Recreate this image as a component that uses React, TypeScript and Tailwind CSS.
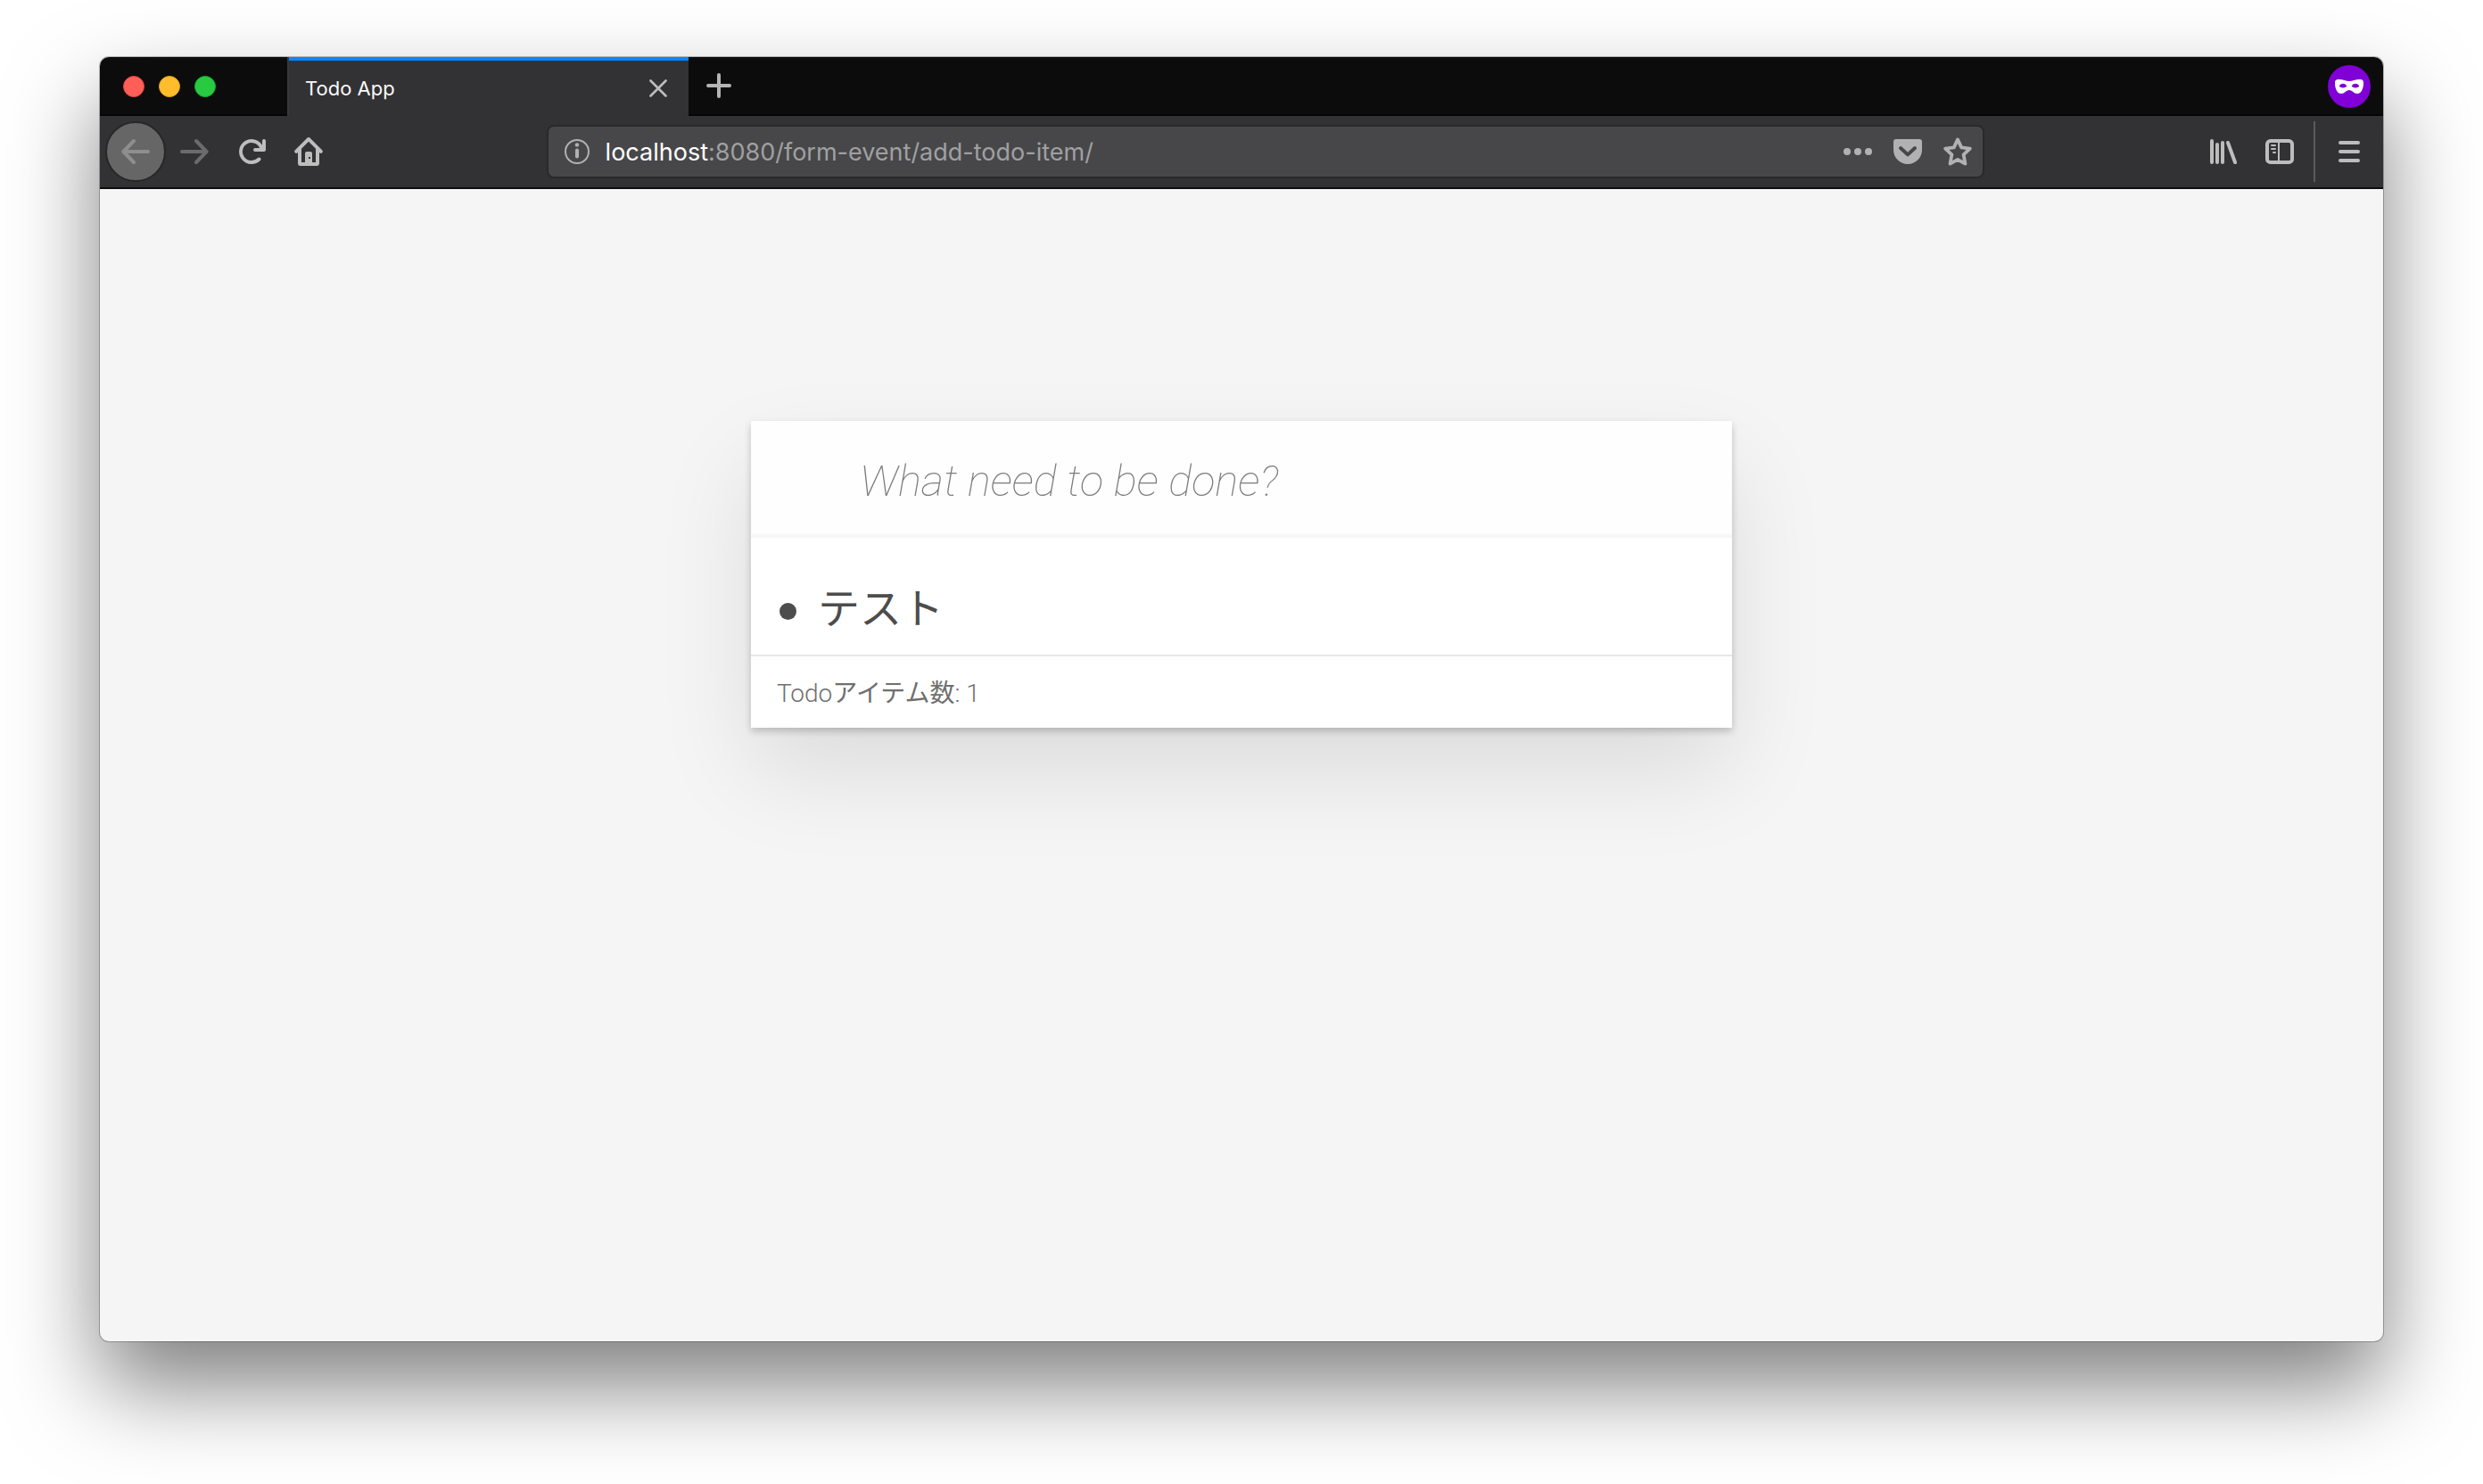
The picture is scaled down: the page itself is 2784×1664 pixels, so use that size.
import { ReactNode } from "react";

function Icon({ children, className = "size-8" }: { children: ReactNode; className?: string }) {
  return (
    <svg viewBox="0 0 16 16" className={className} fill="none" stroke="currentColor" strokeWidth="2" strokeLinecap="round" strokeLinejoin="round" aria-hidden="true">
      {children}
    </svg>
  );
}

function ToolButton({ label, children, className = "text-[#bdbdbd]" }: { label: string; children: ReactNode; className?: string }) {
  return (
    <button type="button" aria-label={label} className={`flex h-16 w-16 shrink-0 items-center justify-center ${className}`}>
      {children}
    </button>
  );
}

function TabBar() {
  return (
    <div className="flex h-[66px] bg-[#0c0c0d] shadow-[inset_0_-2px_0_#050505]">
      <div className="flex w-[210px] shrink-0 items-center gap-4 pl-[26px]">
        <button type="button" aria-label="Close window" className="size-6 rounded-full border border-[#e2463f] bg-[#ff5f57]" />
        <button type="button" aria-label="Minimize window" className="size-6 rounded-full border border-[#e1a116] bg-[#ffbd2e]" />
        <button type="button" aria-label="Zoom window" className="size-6 rounded-full border border-[#12ac28] bg-[#28ca41]" />
      </div>
      <div className="flex w-[450px] shrink-0 border-l-2 border-[#38383a] bg-[#323234]">
        <div className="flex flex-1 items-center justify-between border-t-4 border-[#0a84ff] pr-6 pl-[18px]">
          <span className="text-[22px] leading-8 text-[#f9f9fa]">Todo App</span>
          <button type="button" aria-label="Close tab" className="text-[#bdbdbd]">
            <svg viewBox="0 0 20 20" className="size-5" fill="none" stroke="currentColor" strokeWidth="2.6" strokeLinecap="round" aria-hidden="true">
              <path d="M1.5 1.5l17 17M18.5 1.5l-17 17" />
            </svg>
          </button>
        </div>
      </div>
      <button type="button" aria-label="New tab" className="flex w-[68px] items-center justify-center pb-0.5 text-[#b4b4b5]">
        <Icon>
          <path d="M8 2v12M2 8h12" />
        </Icon>
      </button>
      <div className="ml-auto flex items-center pr-3.5">
        <span className="flex size-12 items-center justify-center rounded-full bg-[#8000d7]" role="img" aria-label="Private browsing">
          <svg viewBox="0 0 32 16" className="h-4 w-8" fill="white" aria-hidden="true">
            <path
              fillRule="evenodd"
              d="M4.500 0C9 0 12.500 2 16 2S23 0 27.500 0C31 0 32 1 32 4C32 11.500 29 16 25 16C21 16 19.500 12 16 12S11 16 7 16C3 16 0 11.500 0 4C0 1 1 0 4.500 0ZM4.700 7.500C6 5.300 7.500 4.700 9 4.700S12 5.300 13.300 7.500C12 9 10.500 9.400 9 9.400S6 9 4.700 7.500ZM18.700 7.500C20 5.300 21.500 4.700 23 4.700S26 5.300 27.300 7.500C26 9 24.500 9.400 23 9.400S20 9 18.700 7.500Z"
            />
          </svg>
        </span>
      </div>
    </div>
  );
}

function AddressBar() {
  return (
    <div className="flex h-[60px] w-[63%] items-center rounded-lg border-2 border-[#29292b] bg-[#474749] pr-3 pl-4 text-[#b1b1b3]">
      <button type="button" aria-label="Site information" className="shrink-0">
        <Icon>
          <circle cx="8" cy="8" r="6.500" strokeWidth="1" />
          <path d="M8 7.200v3.600" />
          <circle cx="8" cy="4.200" r="1.100" fill="currentColor" stroke="none" />
        </Icon>
      </button>
      <div
        role="textbox"
        aria-label="Address"
        contentEditable
        suppressContentEditableWarning
        className="ml-4 flex-1 pt-0.5 text-[27px] leading-8 whitespace-nowrap text-[#a0a0a2] outline-none"
      >
        <span className="text-white">localhost</span>:8080/form-event/add-todo-item/
      </div>
      <div className="flex shrink-0 gap-6">
        <button type="button" aria-label="Page actions">
          <Icon>
            <g fill="currentColor" stroke="none">
              <circle cx="2" cy="8" r="2" />
              <circle cx="8" cy="8" r="2" />
              <circle cx="14" cy="8" r="2" />
            </g>
          </Icon>
        </button>
        <button type="button" aria-label="Save to Pocket">
          <Icon>
            <path d="M1.500 1h13A1.500 1.500 0 0 1 16 2.500V7a8 8 0 0 1-16 0V2.500A1.500 1.500 0 0 1 1.500 1z" fill="currentColor" stroke="none" />
            <path d="M4 6l4 3.700L12 6" stroke="#474749" />
          </Icon>
        </button>
        <button type="button" aria-label="Bookmark this page">
          <Icon>
            <path strokeWidth="1.900" d="M8 1.200l2.100 4.500 4.800.600-3.600 3.400.930 5.100L8 12.400l-4.230 2.400.930-5.100L1.100 6.300l4.800-.600z" />
          </Icon>
        </button>
      </div>
    </div>
  );
}

function Toolbar() {
  return (
    <div className="flex h-[82px] items-center border-b-2 border-[#0c0c0d] bg-[#323234]">
      <button type="button" aria-label="Back" className="ml-1.5 flex size-[68px] shrink-0 items-center justify-center rounded-full border-2 border-[#272728] bg-[#666667] text-[#8e8e8f]">
        <Icon>
          <path d="M15 8H1.500M7 2L1.200 8 7 14" />
        </Icon>
      </button>
      <ToolButton label="Forward" className="text-[#6b6b6c]">
        <Icon>
          <path d="M1 8h13.500M9 2l5.800 6L9 14" />
        </Icon>
      </ToolButton>
      <ToolButton label="Reload">
        <Icon>
          <path
            fill="currentColor"
            stroke="none"
            d="M15 1a1 1 0 0 0-1 1v2.418A6.995 6.995 0 1 0 8 15a6.954 6.954 0 0 0 4.950-2.050 1 1 0 0 0-1.414-1.414A5.019 5.019 0 1 1 12.549 6H10a1 1 0 0 0 0 2h5a1 1 0 0 0 1-1V2a1 1 0 0 0-1-1z"
          />
        </Icon>
      </ToolButton>
      <ToolButton label="Home">
        <Icon>
          <path
            fill="currentColor"
            stroke="none"
            fillRule="evenodd"
            d="M8.700.300a1 1 0 0 0-1.400 0l-7 7A1 1 0 0 0 1.700 8.700L2 8.400V14.500A1.500 1.500 0 0 0 3.500 16h9a1.500 1.500 0 0 0 1.500-1.500V8.400l.300.300a1 1 0 0 0 1.400-1.400zM4 6.400l4-4 4 4V14h-2V9a1 1 0 0 0-1-1H7a1 1 0 0 0-1 1v5H4zM8 11h1v1H8z"
          />
        </Icon>
      </ToolButton>
      <div className="flex-1" />
      <AddressBar />
      <div className="flex-1" />
      <ToolButton label="Library">
        <Icon>
          <path d="M2 2v12M5 4v10M8 3v11M11 3l4 11" />
        </Icon>
      </ToolButton>
      <ToolButton label="Sidebars">
        <Icon>
          <rect x="1" y="2" width="14" height="12" rx="1.800" />
          <path d="M7.500 3v10M3.500 4.500h2M3.500 6.500h2M4.500 8.500h1" strokeWidth="1" />
        </Icon>
      </ToolButton>
      <div className="mx-1.5 h-[68px] w-0.5 shrink-0 bg-[#5b5b5d]" />
      <div className="mr-1.5 shrink-0">
        <ToolButton label="Menu">
          <Icon>
            <path d="M3 3h10M3 8h10M3 13h10" />
          </Icon>
        </ToolButton>
      </div>
    </div>
  );
}

function TodoCard() {
  return (
    <section className="mx-auto w-full max-w-[1100px] bg-white font-[Roboto,'Noto_Sans_CJK_JP',sans-serif] font-light shadow-[0_4px_8px_rgba(0,0,0,0.2),0_50px_100px_rgba(0,0,0,0.1)]">
      <form onSubmit={(e) => e.preventDefault()}>
        <input
          type="text"
          aria-label="What need to be done?"
          placeholder="What need to be done?"
          className="block w-full bg-[#fefefe] pt-[34px] pr-8 pb-[30px] pl-[122px] text-[49px] leading-[67px] text-[#4d4d4d] shadow-[inset_0_-4px_2px_rgba(0,0,0,0.03)] outline-none placeholder:font-thin placeholder:text-[#7c7c7c] placeholder:italic"
        />
      </form>
      <ul className="pt-[46px] pb-[18px]">
        <li className="flex items-center gap-6 pl-8 text-[47px] leading-[67px] font-normal text-[#4d4d4d]">
          <span className="mt-1.5 size-[19px] rounded-full bg-[#4d4d4d]" />
          テスト
        </li>
      </ul>
      <footer className="border-t-2 border-[#e6e6e6] px-[29px] pt-[22px] pb-[18px] text-[28px] leading-10 text-[#6f6f6f]">
        Todo<span className="font-normal">アイテム数</span>: 1
      </footer>
    </section>
  );
}

export default function App() {
  return (
    <div className="flex min-h-screen flex-col bg-white px-28 pt-16 pb-40 font-[Inter,sans-serif]">
      <div className="flex flex-1 flex-col overflow-hidden rounded-[10px] bg-[#f5f5f5] shadow-[0_0_0_1px_rgba(0,0,0,0.25),0_50px_100px_rgba(0,0,0,0.5)]">
        <header>
          <TabBar />
          <Toolbar />
        </header>
        <main className="flex-1 pt-[260px]">
          <TodoCard />
        </main>
      </div>
    </div>
  );
}
